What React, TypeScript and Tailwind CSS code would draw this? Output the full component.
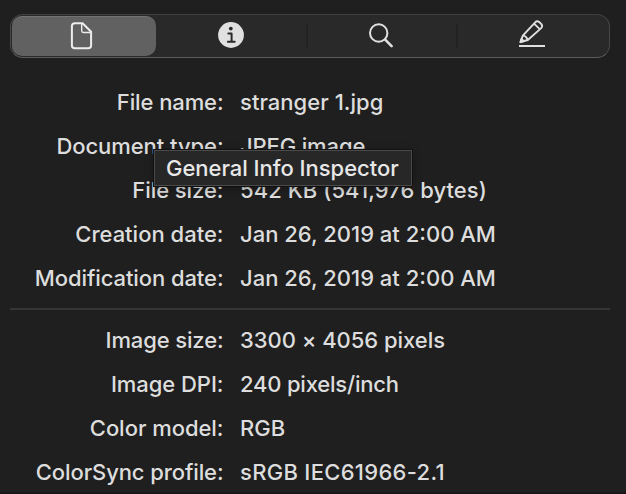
type Row = { label: string; value: string; labelClass?: string; valueClass?: string };

const fileRows: Row[] = [
  { label: 'File name:', value: 'stranger 1.jpg', labelClass: 'tracking-[-0.1px]', valueClass: 'tracking-[0.03px]' },
  { label: 'Document type:', value: 'JPEG image', labelClass: 'tracking-[-0.06px]', valueClass: 'tracking-[-0.13px]' },
  { label: 'File size:', value: '542 KB (541,976 bytes)', labelClass: 'tracking-[-0.05px]', valueClass: 'tracking-[0.05px]' },
  { label: 'Creation date:', value: 'Jan 26, 2019 at 2:00 AM' },
  { label: 'Modification date:', value: 'Jan 26, 2019 at 2:00 AM', labelClass: 'tracking-[-0.08px]' },
];

const imageRows: Row[] = [
  { label: 'Image size:', value: '3300 × 4056 pixels', labelClass: 'tracking-[-0.13px]', valueClass: 'tracking-[-0.03px]' },
  { label: 'Image DPI:', value: '240 pixels/inch', labelClass: 'tracking-[-0.05px]', valueClass: 'tracking-[-0.2px]' },
  { label: 'Color model:', value: 'RGB', labelClass: 'tracking-[-0.04px]' },
  { label: 'ColorSync profile:', value: 'sRGB IEC61966-2.1', labelClass: 'tracking-[-0.1px]', valueClass: 'tracking-[0.3px]' },
];

function InfoRow({ label, value, labelClass = '', valueClass = '' }: Row) {
  return (
    <div className="flex h-11 items-center gap-[16.5px] whitespace-nowrap">
      <dt className="flex w-[223.5px] shrink-0 justify-end">
        <span className={labelClass}>{label}</span>
      </dt>
      <dd>
        <span className={valueClass}>{value}</span>
      </dd>
    </div>
  );
}

function DocumentIcon() {
  return (
    <svg width="24" height="30" viewBox="0 0 24 30" fill="none" stroke="#ededed" strokeLinejoin="round">
      <path d="M4.9 1.2H12.6L21.1 9.8V23.4Q21.1 26.2 18.3 26.2H4.7Q1.9 26.2 1.9 23.4V4Q1.9 1.2 4.9 1.2Z" strokeWidth="2" />
      <path d="M11.7 1.5V8.8Q11.7 10.5 13.4 10.5H20.8" strokeWidth="1.4" />
    </svg>
  );
}

function InfoIcon() {
  return (
    <svg width="26" height="26" viewBox="0 0 26 26">
      <circle cx="13" cy="13" r="12.9" fill="#e0e0e0" />
      <circle cx="12.8" cy="6.6" r="1.9" fill="#292929" />
      <path d="M10.3 11.5H13.6V19.6M9.9 19.7H16.7" fill="none" stroke="#292929" strokeWidth="2" strokeLinecap="round" strokeLinejoin="round" />
    </svg>
  );
}

function SearchIcon() {
  return (
    <svg width="24" height="25" viewBox="0 0 24 25" fill="none" stroke="#e0e0e0">
      <circle cx="9.7" cy="10" r="8.7" strokeWidth="2" />
      <path d="M16.2 16.7L22.6 23.1" strokeWidth="2.6" strokeLinecap="round" />
    </svg>
  );
}

function PencilIcon() {
  return (
    <svg width="28" height="28" viewBox="0 0 28 28" fill="none" stroke="#e0e0e0" strokeWidth="1.9" strokeLinejoin="round">
      <path d="M2.6 22L4.8 15.6L17.2 2.3Q19 0.4 21.2 2L23.4 4.1Q25 6.1 23.2 8.1L9.8 20Z" />
      <path d="M16 3.6L21.8 9.1M4.9 15.6Q8.6 16 9.6 20" />
      <path d="M2.4 22.2L3.4 19L5.6 21Z" fill="#e0e0e0" />
      <path d="M1 26H27" strokeWidth="2" />
    </svg>
  );
}

export default function App() {
  return (
    <main className="relative h-[494px] w-[626px] overflow-hidden border-b-2 border-[#1a151a] bg-[#1f1f1f] pt-3.5 font-['Inter','Liberation_Sans',sans-serif] text-[22px] leading-none font-medium text-[#dddddd]">
      <div role="tablist" className="mr-4 ml-2.5 flex h-11 rounded-[13px] border border-t-[#404040] border-x-[#484848] border-b-[#5c5c5c] bg-[#292929] p-px">
        <button aria-label="General info" className="flex h-10 w-36 items-center justify-center rounded-[10px] border-t border-[#737373] bg-[#616161] pr-1">
          <DocumentIcon />
        </button>
        <button aria-label="More info" className="flex w-[150px] items-center justify-center pb-0.5">
          <InfoIcon />
        </button>
        <div className="my-2 w-0.5 bg-[#222222]" />
        <button aria-label="Keywords" className="flex w-[148px] items-center justify-center pr-0.5 pb-px">
          <SearchIcon />
        </button>
        <div className="my-2 w-0.5 bg-[#222222]" />
        <button aria-label="Annotations" className="flex w-[147px] items-center justify-center pb-1">
          <PencilIcon />
        </button>
      </div>
      <dl className="pt-[22px]">
        {fileRows.map((row) => <InfoRow key={row.label} {...row} />)}
      </dl>
      <hr className="mt-2 mr-4 mb-2 ml-2.5 border-t-2 border-[#353535]" />
      <dl>
        {imageRows.map((row) => <InfoRow key={row.label} {...row} />)}
      </dl>
      <div role="tooltip" className="absolute top-[150px] left-[154px] flex h-9 w-[258px] items-center border border-[#4a4a4a] bg-[#272727] pl-[11px] tracking-[-0.03px] whitespace-nowrap text-[#e8e8e8] shadow-[0_2px_8px_rgba(0,0,0,0.35),0_0_0_1px_#151515]">
        General Info Inspector
      </div>
    </main>
  );
}
